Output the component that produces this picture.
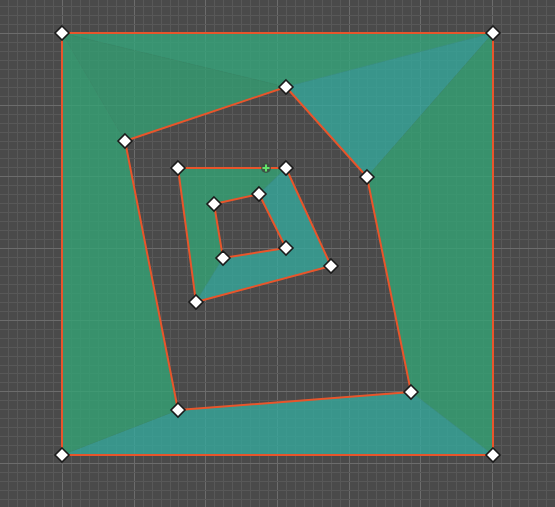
type Pt = [number, number];

const TL: Pt = [62, 33];
const TR: Pt = [493, 33];
const BR: Pt = [493, 455];
const BL: Pt = [62, 455];

const A: Pt[] = [
  [286, 87],
  [367, 177],
  [411, 392],
  [178, 410],
  [125, 141],
];
const B: Pt[] = [
  [178, 168],
  [286, 168],
  [331, 266],
  [196, 302],
];
const C: Pt[] = [
  [214, 204],
  [259, 194],
  [286, 248],
  [223, 258],
];

const GREEN = "#34a576";
const GREEN_LT = "#35a87d";
const GREEN_DK = "#33a073";
const TEAL = "#35aa9e";

// regions of the filled area, grouped by the tint each one shows
const regions: { p: Pt[]; c: string }[] = [
  { p: [TL, TR, A[0]], c: GREEN_LT },
  { p: [TL, A[0], A[4]], c: GREEN_DK },
  { p: [TR, A[0], A[1]], c: TEAL },
  { p: [TR, A[1], A[2], BR], c: GREEN },
  { p: [BR, A[2], A[3], BL], c: TEAL },
  { p: [BL, A[3], A[4], TL], c: GREEN },
  // inner ring
  { p: [B[3], B[0], B[1], C[1], C[0], C[3]], c: GREEN },
  { p: [B[1], B[2], B[3], C[3], C[2], C[1]], c: TEAL },
];

const pts = (p: Pt[]) => p.map(([x, y]) => `${x},${y}`).join(" ");

const STEP = 8.96;
const gridX = Array.from({ length: 70 }, (_, i) => i - 7);
const gridY = Array.from({ length: 62 }, (_, i) => i - 4);

const Grid = () => (
  <g shapeRendering="crispEdges">
    {gridX.map((i) => {
      const x = Math.round(62 + i * STEP) + 0.5;
      const major = ((i % 8) + 8) % 8 === 0;
      return (
        <line
          key={`x${i}`}
          x1={x}
          y1={0}
          x2={x}
          y2={507}
          stroke={major ? "#6c6c6c" : "#585858"}
          strokeWidth={1}
        />
      );
    })}
    {gridY.map((i) => {
      const y = Math.round(33 + i * STEP) + 0.5;
      const major = ((i % 8) + 8) % 8 === 0;
      return (
        <line
          key={`y${i}`}
          x1={0}
          y1={y}
          x2={555}
          y2={y}
          stroke={major ? "#6c6c6c" : "#585858"}
          strokeWidth={1}
        />
      );
    })}
  </g>
);

const Handle = ({ p }: { p: Pt }) => {
  const [x, y] = p;
  const r = 7;
  return (
    <polygon
      points={`${x},${y - r} ${x + r},${y} ${x},${y + r} ${x - r},${y}`}
      fill="#ffffff"
      stroke="#1b1b1b"
      strokeWidth={1.6}
      strokeLinejoin="miter"
    />
  );
};

export default function App() {
  const all: Pt[] = [TL, TR, BR, BL, ...A, ...B, ...C];
  return (
    <div className="w-[555px] h-[507px] bg-[#4a4a4a] overflow-hidden">
      <svg width={555} height={507} viewBox="0 0 555 507" className="block">
        <Grid />

        {/* filled triangulation */}
        <g opacity={0.78}>
          {regions.map((t, i) => (
            <polygon key={i} points={pts(t.p)} fill={t.c} stroke={t.c} strokeWidth={0.5} strokeLinejoin="round" />
          ))}
        </g>

        {/* outlines */}
        <g fill="none" stroke="#e8552b" strokeWidth={2} strokeLinejoin="round">
          <polygon points={pts([TL, TR, BR, BL])} />
          <polygon points={pts(A)} />
          <polygon points={pts(B)} />
          <polygon points={pts(C)} />
        </g>

        {/* add-point marker */}
        <circle cx={266} cy={168} r={5} fill="#3e4a40" opacity={0.85} />
        <g stroke="#62e26a" strokeWidth={2}>
          <line x1={262.5} y1={168} x2={269.5} y2={168} />
          <line x1={266} y1={164.5} x2={266} y2={171.5} />
        </g>

        {all.map((p, i) => (
          <Handle key={i} p={p} />
        ))}
      </svg>
    </div>
  );
}
